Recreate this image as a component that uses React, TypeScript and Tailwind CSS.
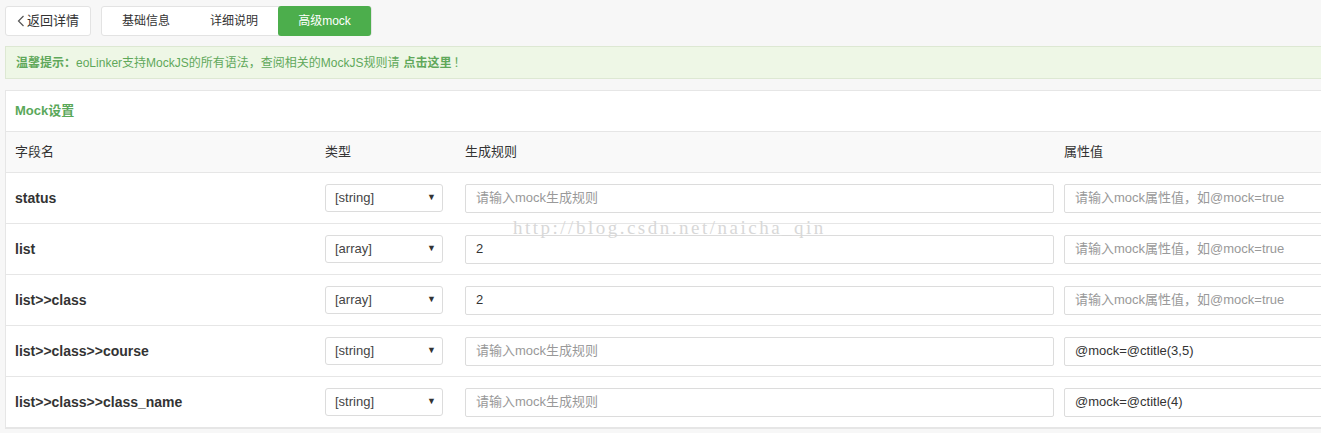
import React from 'react'

const rows = [
  { name: 'status', type: '[string]', rule: '', value: '' },
  { name: 'list', type: '[array]', rule: '2', value: '' },
  { name: 'list>>class', type: '[array]', rule: '2', value: '' },
  { name: 'list>>class>>course', type: '[string]', rule: '', value: '@mock=@ctitle(3,5)' },
  { name: 'list>>class>>class_name', type: '[string]', rule: '', value: '@mock=@ctitle(4)' },
]

export default function App() {
  return (
    <div
      className="relative h-[433px] w-full overflow-hidden bg-[#f7f7f7] pl-[5px] text-[13px] text-[#333]"
      style={{ fontFamily: '"Liberation Sans", "Noto Sans CJK SC", sans-serif' }}
    >
      {/* Top nav */}
      <div className="flex gap-[10px] pt-[6px]">
        <button className="flex h-[30px] w-[86px] items-center justify-center gap-[2px] rounded-[3px] border border-[#e3e3e3] bg-white text-[13px] text-[#333]">
          <svg width="8" height="12" viewBox="0 0 8 12" fill="none" stroke="#555" strokeWidth="1.2">
            <path d="M6.5 1 L1.5 6 L6.5 11" />
          </svg>
          返回详情
        </button>
        <div className="flex h-[30px] rounded-[3px] border border-[#e3e3e3] bg-white">
          <button className="w-[88px] text-[12px] text-[#333]">基础信息</button>
          <button className="w-[88px] text-[12px] text-[#333]">详细说明</button>
          <button className="-my-px w-[93px] rounded-[3px] bg-[#4cae4c] text-[12px] text-white">高级mock</button>
        </div>
      </div>

      {/* Notice */}
      <div className="mt-[10px] flex h-[33px] w-[1330px] items-center border border-[#dde8d3] bg-[#eef7e6] px-[10px] text-[12px] text-[#5fa85a]">
        <span className="font-bold">温馨提示：</span>
        <span>eoLinker支持MockJS的所有语法，查阅相关的MockJS规则请</span>
        <span className="ml-[4px] font-bold">点击这里</span>
        <span className="ml-[2px]">！</span>
      </div>

      {/* Mock card */}
      <div className="mt-[11px] w-[1340px] border border-[#e6e6e6] bg-white">
        <div className="flex h-[40px] items-center px-[9px] text-[13px] font-bold text-[#5aa85a]">Mock设置</div>
        <div className="flex h-[42px] items-center border-y border-[#e6e6e6] bg-[#f9f9f9] text-[13px] text-[#333]">
          <div className="w-[319px] pl-[9px]">字段名</div>
          <div className="w-[140px]">类型</div>
          <div className="w-[599px]">生成规则</div>
          <div>属性值</div>
        </div>
        {rows.map(r => (
          <div key={r.name} className="flex h-[51px] items-center border-b border-[#e6e6e6]">
            <div className="w-[319px] pl-[9px] text-[14px] font-bold text-[#333]">{r.name}</div>
            <div className="w-[140px]">
              <div className="flex h-[28px] w-[118px] items-center justify-between rounded-[3px] border border-[#dcdcdc] bg-white pl-[9px] pr-[6px] text-[13px] text-[#444]">
                <span>{r.type}</span>
                <span className="text-[9px] text-[#333]">▼</span>
              </div>
            </div>
            <div className="w-[599px]">
              <div className="flex h-[29px] w-[589px] items-center rounded-[2px] border border-[#dcdcdc] bg-white px-[10px] text-[13px]">
                {r.rule ? <span className="text-[#333]">{r.rule}</span> : <span className="text-[#999]">请输入mock生成规则</span>}
              </div>
            </div>
            <div className="flex-1">
              <div className="flex h-[29px] w-[270px] items-center rounded-[2px] border border-[#dcdcdc] bg-white px-[10px] text-[13px]">
                {r.value ? <span className="text-[#333]">{r.value}</span> : <span className="text-[#999]">请输入mock属性值，如@mock=true</span>}
              </div>
            </div>
          </div>
        ))}
      </div>

      {/* watermark */}
      <div
        className="pointer-events-none absolute left-[513px] top-[214px] text-[19px] tracking-[2.5px] text-[#d8d8d8]"
        style={{ fontFamily: '"Liberation Serif", "DejaVu Serif", serif' }}
      >
        http://blog.csdn.net/naicha_qin
      </div>
    </div>
  )
}
